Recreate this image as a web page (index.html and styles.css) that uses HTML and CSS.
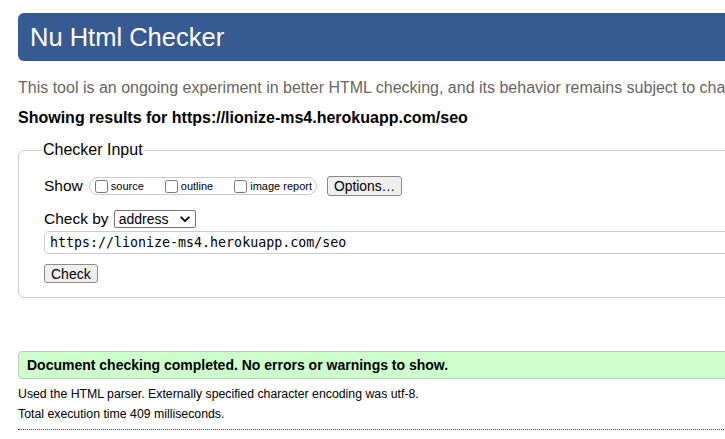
FILE: index.html
```html
<!DOCTYPE html>
<html lang="en">
<head>
<meta charset="utf-8">
<title>Showing results for https://lionize-ms4.herokuapp.com/seo - Nu Html Checker</title>
<link rel="stylesheet" href="styles.css">
</head>
<body>
<div class="page">
  <h1 class="title">Nu Html Checker</h1>
  <p class="intro">This tool is an ongoing experiment in better HTML checking, and its behavior remains subject to change</p>
  <h2 class="results">Showing results for https://lionize-ms4.herokuapp.com/seo</h2>
  <fieldset class="checker">
    <legend class="legend">Checker Input</legend>
    <div class="row show-row">
      <span class="label">Show</span>
      <span class="group">
        <label class="opt"><input type="checkbox" class="cb">source</label>
        <label class="opt"><input type="checkbox" class="cb">outline</label>
        <label class="opt"><input type="checkbox" class="cb">image report</label>
      </span>
      <button class="btn options" type="button">Options…</button>
    </div>
    <div class="row by-row">
      <span class="label">Check by</span>
      <span class="select">
        <span class="select-text">address</span>
        <svg class="chev" width="10" height="7" viewBox="0 0 10 7"><path d="M1.2 1.3 L5 5.1 L8.8 1.3" fill="none" stroke="#000" stroke-width="1.9" stroke-linecap="round" stroke-linejoin="round"/></svg>
      </span>
    </div>
    <div class="url">https://lionize-ms4.herokuapp.com/seo</div>
    <button class="btn check" type="button">Check</button>
  </fieldset>
  <p class="success">Document checking completed. No errors or warnings to show.</p>
  <p class="meta">Used the HTML parser. Externally specified character encoding was utf-8.</p>
  <p class="meta">Total execution time 409 milliseconds.</p>
  <hr class="dots">
</div>
</body>
</html>
```

FILE: styles.css
```css
html {
  overflow: hidden;
}
body {
  margin: 0;
  font-family: "Liberation Sans", Arial, sans-serif;
  font-size: 16px;
  color: #000;
  background: #fff;
}
.page {
  padding: 13px 0 0 18px;
  width: 1000px;
}
.title {
  margin: 0;
  height: 48px;
  line-height: 48px;
  padding-left: 12px;
  background: #385a92;
  color: #fff;
  font-size: 25.5px;
  font-weight: normal;
  border-radius: 6px;
}
.intro {
  margin: 18px 0 0;
  font-size: 16px;
  line-height: 18px;
  color: #666;
  white-space: nowrap;
}
.results {
  margin: 12px 0 0;
  font-size: 16px;
  line-height: 18px;
  font-weight: bold;
}
.checker {
  margin: 14px 0 0;
  padding: 17px 25px 14px 25px;
  border: 1px solid #ccc;
  border-radius: 6px;
}
.legend {
  font-size: 16px;
  line-height: 18px;
  padding: 0 1px;
  margin-left: -2px;
}
.row {
  display: flex;
  align-items: center;
}
.label {
  font-size: 15.5px;
}
.show-row {
  height: 20px;
}
.group {
  display: flex;
  align-items: center;
  height: 16px;
  margin-left: 6px;
  padding: 0 4px 0 5px;
  border: 1px solid #ccc;
  border-radius: 9px;
  font-size: 11px;
}
.opt {
  display: flex;
  align-items: center;
  margin-right: 21px;
}
.opt:last-child {
  margin-right: 0;
}
.cb {
  width: 13px;
  height: 13px;
  margin: 0 3px 0 0;
}
.btn {
  font-family: "Liberation Sans", Arial, sans-serif;
  background: #efefef;
  border: 1px solid #8a8a8a;
  border-radius: 3px;
  color: #000;
  padding: 0 6px;
  box-sizing: border-box;
}
.options {
  margin-left: 10px;
  height: 20px;
  font-size: 13.8px;
}
.by-row {
  margin-top: 14px;
  height: 18px;
}
.select {
  display: flex;
  align-items: center;
  justify-content: space-between;
  width: 82px;
  height: 18px;
  margin-left: 5px;
  padding: 0 5px 0 4px;
  border: 1px solid #767676;
  border-radius: 2px;
  font-size: 14px;
  box-sizing: border-box;
}
.url {
  margin-top: 3px;
  height: 23px;
  line-height: 21px;
  padding-left: 5px;
  border: 1px solid #ccc;
  border-radius: 5px;
  box-sizing: border-box;
  font-family: "DejaVu Sans Mono", "Liberation Mono", monospace;
  font-size: 13.3px;
}
.check {
  display: block;
  margin-top: 10px;
  height: 19px;
  font-size: 14px;
}
.success {
  margin: 53px 0 0;
  height: 28px;
  line-height: 26px;
  padding-left: 8px;
  box-sizing: border-box;
  background: #ccffcc;
  border: 1px solid #c4c4c4;
  border-radius: 4px 0 0 4px;
  font-size: 14px;
  font-weight: bold;
}
.meta {
  margin: 8px 0 0;
  font-size: 12.3px;
  line-height: 15px;
}
.meta + .meta {
  margin-top: 5px;
}
.dots {
  margin: 7px 0 0;
  border: 0;
  border-top: 1px dotted #444;
  height: 0;
}
```
